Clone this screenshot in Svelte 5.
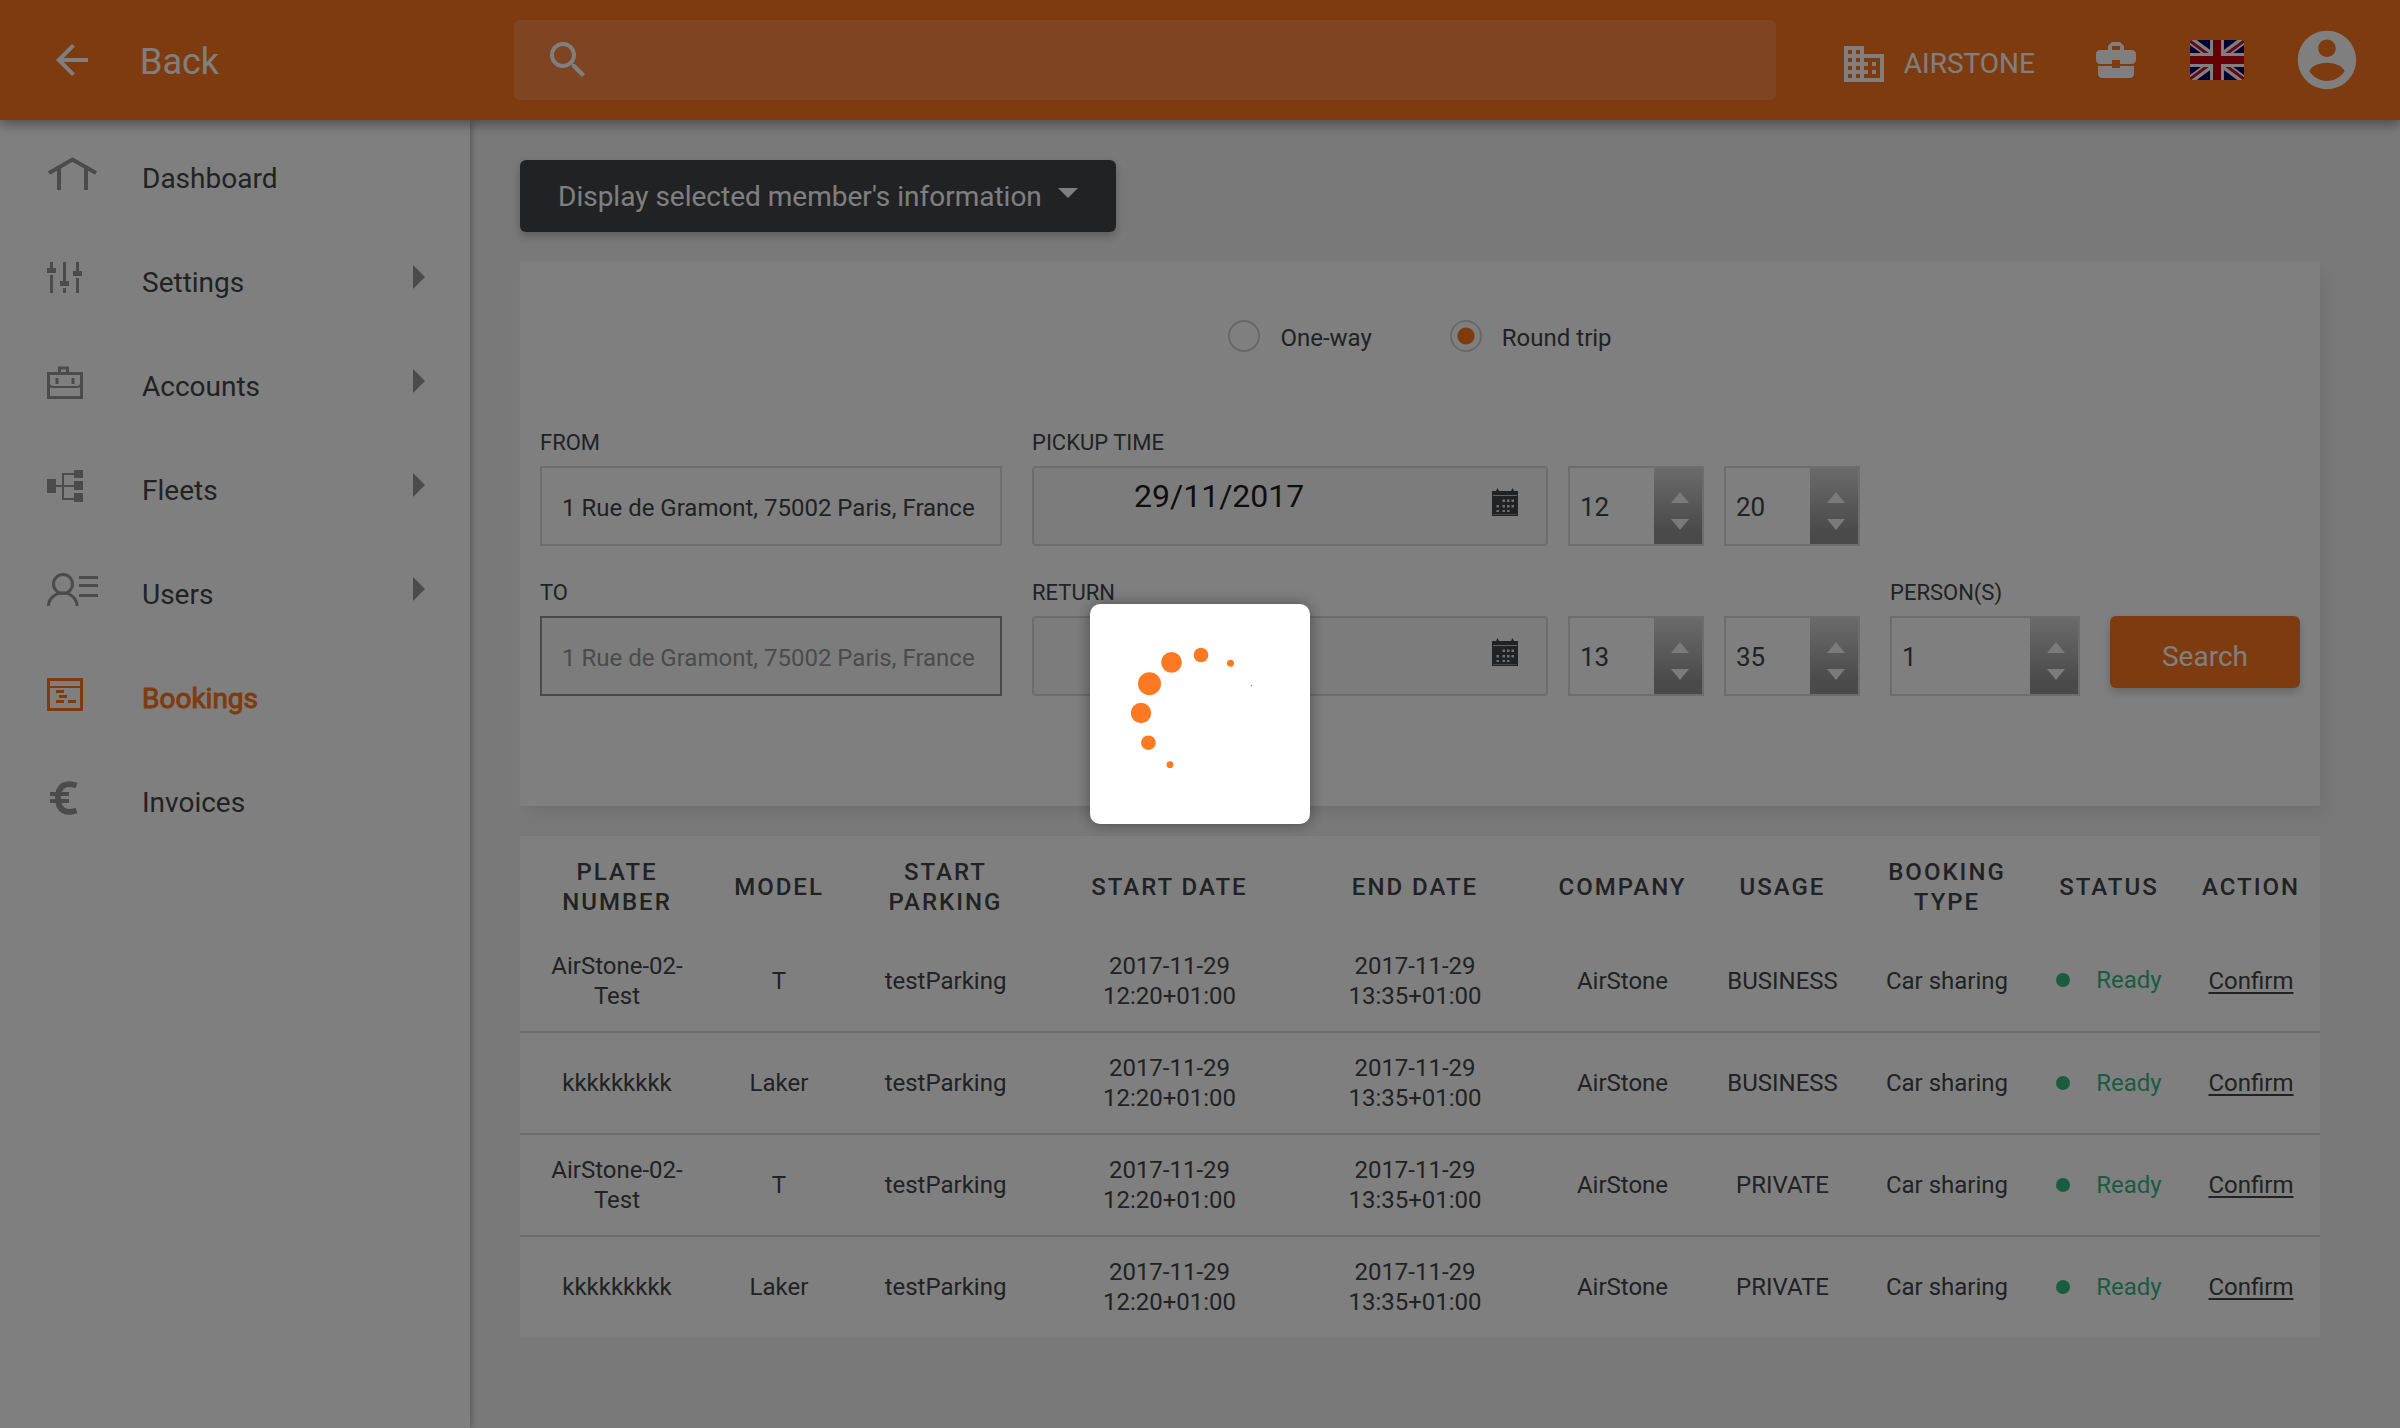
<script>
  const nav = [
    { id: 'dashboard', label: 'Dashboard', more: false },
    { id: 'settings', label: 'Settings', more: true },
    { id: 'accounts', label: 'Accounts', more: true },
    { id: 'fleets', label: 'Fleets', more: true },
    { id: 'users', label: 'Users', more: true },
    { id: 'bookings', label: 'Bookings', more: false, active: true },
    { id: 'invoices', label: 'Invoices', more: false }
  ];

  const columns = [
    { title: 'Plate number', share: 194 },
    { title: 'Model', share: 130 },
    { title: 'Start parking', share: 203 },
    { title: 'Start date', share: 245 },
    { title: 'End date', share: 246 },
    { title: 'Company', share: 169 },
    { title: 'Usage', share: 151 },
    { title: 'Booking type', share: 178 },
    { title: 'Status', share: 146 },
    { title: 'Action', share: 138 }
  ];
  const total = columns.reduce((sum, c) => sum + c.share, 0);

  const start = '2017-11-29 12:20+01:00';
  const end = '2017-11-29 13:35+01:00';
  const rows = [
    ['AirStone-02-Test', 'T', 'testParking', start, end, 'AirStone', 'BUSINESS', 'Car sharing'],
    ['kkkkkkkkk', 'Laker', 'testParking', start, end, 'AirStone', 'BUSINESS', 'Car sharing'],
    ['AirStone-02-Test', 'T', 'testParking', start, end, 'AirStone', 'PRIVATE', 'Car sharing'],
    ['kkkkkkkkk', 'Laker', 'testParking', start, end, 'AirStone', 'PRIVATE', 'Car sharing']
  ];

  let trip = $state('round');
  let pickupDate = $state('29/11/2017');
  let returnDate = $state('29/11/2017');
</script>

{#snippet calendar()}
  <svg class="calendar" width="26" height="28" viewBox="0 0 26 28" aria-hidden="true">
    <path fill="#424549" d="M0 3h4l1.500-3L7 3h12l1.500-3L22 3h4v25H0z" />
    <path fill="#c4c4c4" d="M1 7h24v1H1z" />
    <path fill="#8a8a8a" d="M1 26h24v1H1z" />
    <path fill="#e0e0e0" d="M10.500 11.500H13V14h-2.500zm4.500 0h2.500V14H15zm4.500 0H22V14h-2.500zM4.500 17H7v2.500H4.500zm6 0H13v2.500h-2.500zm4.500 0h2.500v2.500H15zm4.500 0H22v2.500h-2.500zM4.500 22H7v2H4.500zm6 0H13v2h-2.500zm4.500 0h2.500v2H15z" />
  </svg>
{/snippet}

{#snippet stepper(id, name, value)}
  <div class="stepper">
    <input {id} type="text" inputmode="numeric" aria-label={name} {value} />
    <div class="steps">
      <button type="button" aria-label="Increase {name}"><svg width="20" height="12" viewBox="0 0 20 12"><path d="M10 0l9 11H1z" /></svg></button>
      <button type="button" aria-label="Decrease {name}"><svg width="20" height="12" viewBox="0 0 20 12"><path d="M10 12L1 1h18z" /></svg></button>
    </div>
  </div>
{/snippet}

{#snippet navIcon(id)}
  {#if id === 'dashboard'}
    <svg width="52" height="34" viewBox="0 0 52 34"><path d="M2 16L25.500 2.500 49 16M12 11v22M39 11v22" fill="none" stroke="currentColor" stroke-width="4" /></svg>
  {:else if id === 'settings'}
    <svg width="36" height="32" viewBox="0 0 36 32"><path d="M3 0h3v6h3v5H0V6h3zm0 13h3v18H3zM16 0h3v19h3v5h-9v-5h3zm0 26h3v5h-3zM29 0h3v9h3v5h-9V9h3zm0 16h3v15h-3z" fill="currentColor" /></svg>
  {:else if id === 'accounts'}
    <svg width="36" height="33" viewBox="0 0 36 33"><g fill="none" stroke="currentColor"><path d="M1.500 7.500h33v24h-33z" stroke-width="3" /><path d="M12.500 7V2h8v5" stroke-width="3" /><path d="M2 17c0 3 2 4 4 4h24c2 0 4-1 4-4" stroke-width="2" /><path d="M10 12v6M26 12v6" stroke-width="3" /></g></svg>
  {:else if id === 'fleets'}
    <svg width="36" height="32" viewBox="0 0 36 32"><path d="M0 9h9v14H0zM27 0h9v8h-9zM27 11h9v9h-9zM27 23h9v9h-9z" fill="currentColor" /><path d="M9 16h18M27 4H16v25h11" fill="none" stroke="currentColor" stroke-width="2" /></svg>
  {:else if id === 'users'}
    <svg width="52" height="34" viewBox="0 0 52 34"><g fill="none" stroke="currentColor" stroke-width="3"><circle cx="16" cy="11" r="9.500" /><path d="M1.500 33c0-7 6-13 14.500-13s14 6 14 13M32 4.500h19M32 12.500h19M32 22.500h19" /></g></svg>
  {:else if id === 'bookings'}
    <svg width="36" height="33" viewBox="0 0 36 33"><path d="M1.500 1.500h33v30h-33z" fill="none" stroke="currentColor" stroke-width="3" /><path d="M3 8h30v2H3zM9 12h8v3H9zM12 17h8v3h-8zM9 22h8v3H9zM21 22h8v3h-8z" fill="currentColor" /></svg>
  {:else}
    <svg width="36" height="34" viewBox="0 0 36 34"><path d="M29.500 4.500C19 1 11 4 11 17s8 16 18.500 12.500" fill="none" stroke="currentColor" stroke-width="6" /><path d="M3 13h19M3 20h19" stroke="currentColor" stroke-width="4" /></svg>
  {/if}
{/snippet}

<div class="app">
  <header>
    <a class="back" href="#back">
      <svg width="48" height="48" viewBox="0 0 24 24"><path d="M20 11H7.830l5.590-5.590L12 4l-8 8 8 8 1.410-1.410L7.830 13H20v-2z" /></svg>
      <span>Back</span>
    </a>
    <label class="search">
      <svg width="48" height="48" viewBox="0 0 24 24"><path d="M15.500 14h-.79l-.28-.27C15.410 12.590 16 11.110 16 9.500 16 5.910 13.090 3 9.500 3S3 5.910 3 9.500 5.910 16 9.500 16c1.610 0 3.090-.59 4.230-1.570l.27.28v.79l5 4.990L20.490 19l-4.990-5zm-6 0C7.010 14 5 11.990 5 9.500S7.010 5 9.500 5 14 7.010 14 9.500 11.990 14 9.500 14z" /></svg>
      <input type="search" aria-label="Search the site" />
    </label>
    <div class="tools">
      <a class="company" href="#company">
        <svg width="48" height="48" viewBox="0 0 24 24"><path d="M12 7V3H2v18h20V7H12zM6 19H4v-2h2v2zm0-4H4v-2h2v2zm0-4H4V9h2v2zm0-4H4V5h2v2zm4 12H8v-2h2v2zm0-4H8v-2h2v2zm0-4H8V9h2v2zm0-4H8V5h2v2zm10 12h-8v-2h2v-2h-2v-2h2v-2h-2V9h8v10zm-2-8h-2v2h2v-2zm0 4h-2v2h2v-2z" /></svg>
        <span>AIRSTONE</span>
      </a>
      <button class="case" type="button" aria-label="Business">
        <svg width="48" height="48" viewBox="0 0 24 24"><path d="M10 16v-1H3.010L3 19c0 1.110.89 2 2 2h14c1.110 0 2-.89 2-2v-4h-7v1h-4zm10-9h-4.010V5l-2-2h-4l-2 2v2H4c-1.100 0-2 .9-2 2v3c0 1.110.89 2 2 2h6v-2h4v2h6c1.100 0 2-.9 2-2V9c0-1.100-.9-2-2-2zm-6 0h-4V5h4v2z" /></svg>
      </button>
      <button class="flag" type="button" aria-label="English">
        <svg width="54" height="40" viewBox="0 0 54 40">
          <path fill="#006" d="M0 0h54v40H0z" />
          <path stroke="#fff" stroke-width="8" d="M0 0l54 40M54 0L0 40" />
          <path stroke="#c8102e" stroke-width="3" d="M0 1l27 20M54 39L27 19M54 1L27 21M0 39l27-20" />
          <path fill="#fff" d="M20 0h14v40H20zM0 13h54v14H0z" />
          <path fill="#c8000c" d="M23 0h8v40h-8zM0 16h54v8H0z" />
        </svg>
      </button>
      <button class="avatar" type="button" aria-label="My profile">
        <svg width="70" height="70" viewBox="0 0 24 24"><path d="M12 2C6.480 2 2 6.480 2 12s4.480 10 10 10 10-4.480 10-10S17.520 2 12 2zm0 3c1.660 0 3 1.340 3 3s-1.340 3-3 3-3-1.340-3-3 1.340-3 3-3zm0 14.200c-2.500 0-4.710-1.280-6-3.220.03-1.990 4-3.080 6-3.080 1.990 0 5.970 1.090 6 3.080-1.290 1.940-3.500 3.220-6 3.220z" /></svg>
      </button>
    </div>
  </header>

  <div class="body">
    <nav>
      {#each nav as item (item.id)}
        <a href="#{item.id}" class:active={item.active}>
          <span class="icon">{@render navIcon(item.id)}</span>
          <span class="label">{item.label}</span>
          {#if item.more}
            <svg class="more" width="12" height="24" viewBox="0 0 12 24"><path d="M0 0l12 12L0 24z" fill="currentColor" /></svg>
          {/if}
        </a>
      {/each}
    </nav>

    <main>
      <button class="member" type="button">
        <span>Display selected member's information</span>
        <svg width="20" height="10" viewBox="0 0 20 10"><path d="M0 0h20L10 10z" /></svg>
      </button>

      <form class="card booking" onsubmit={(e) => e.preventDefault()}>
        <div class="trip">
          <label><input type="radio" name="trip" value="one" bind:group={trip} /><span>One-way</span></label>
          <label><input type="radio" name="trip" value="round" bind:group={trip} /><span>Round trip</span></label>
        </div>

        <div class="line">
          <div class="field place">
            <label for="from">FROM</label>
            <input id="from" type="text" value="1 Rue de Gramont, 75002 Paris, France" />
          </div>
          <div class="field date">
            <label for="pickup">PICKUP TIME</label>
            <div class="datebox">
              <input id="pickup" type="text" bind:value={pickupDate} />
              {@render calendar()}
            </div>
          </div>
          {@render stepper('pickup-hour', 'pickup hour', '12')}
          {@render stepper('pickup-minute', 'pickup minute', '20')}
        </div>

        <div class="line">
          <div class="field place">
            <label for="to">TO</label>
            <input id="to" type="text" value="1 Rue de Gramont, 75002 Paris, France" disabled />
          </div>
          <div class="field date">
            <label for="return">RETURN</label>
            <div class="datebox">
              <input id="return" type="text" bind:value={returnDate} />
              {@render calendar()}
            </div>
          </div>
          {@render stepper('return-hour', 'return hour', '13')}
          {@render stepper('return-minute', 'return minute', '35')}
          <div class="field persons">
            <label for="persons">PERSON(S)</label>
            {@render stepper('persons', 'persons', '1')}
          </div>
          <button class="submit" type="submit">Search</button>
        </div>
      </form>

      <div class="card">
        <table>
          <colgroup>
            {#each columns as c (c.title)}
              <col style="width: {(c.share / total) * 100}%" />
            {/each}
          </colgroup>
          <thead>
            <tr>
              {#each columns as c (c.title)}<th scope="col">{c.title}</th>{/each}
            </tr>
          </thead>
          <tbody>
            {#each rows as row, i (i)}
              <tr>
                {#each row as cell, j (j)}<td>{cell}</td>{/each}
                <td><span class="status">Ready</span></td>
                <td><a href="#confirm">Confirm</a></td>
              </tr>
            {/each}
          </tbody>
        </table>
      </div>
    </main>
  </div>
</div>

<div class="overlay">
  <div class="loader" role="status" aria-label="Loading">
    <svg width="220" height="220" viewBox="0 0 220 220" fill="#ff7922">
      <circle cx="111" cy="51" r="7.300" />
      <circle cx="81.500" cy="58.300" r="10.400" />
      <circle cx="59.500" cy="79.700" r="11.500" />
      <circle cx="51" cy="109" r="10.200" />
      <circle cx="58.400" cy="138.700" r="7.300" />
      <circle cx="80" cy="160.700" r="3.400" />
      <circle cx="140.500" cy="59.300" r="3.500" />
      <circle cx="161.400" cy="81.600" r="0.800" />
    </svg>
  </div>
</div>

<style>
  :global(body) {
    margin: 0;
    background: #f3f3f3;
  }
  .app,
  .app input,
  .app button {
    font-family: Roboto, 'Liberation Sans', sans-serif;
    color: #424549;
  }
  .app *,
  .overlay * {
    box-sizing: border-box;
  }
  .app {
    display: flex;
    flex-direction: column;
    min-height: 100vh;
    font-size: 24px;
    line-height: 30px;
  }
  svg {
    display: block;
    flex: none;
  }
  a {
    color: inherit;
    text-decoration: none;
  }
  button {
    border: 0;
    padding: 0;
    background: none;
    cursor: pointer;
  }

  header {
    display: flex;
    align-items: center;
    height: 120px;
    padding: 0 38px 0 48px;
    background: #fd7721;
    box-shadow: 0 4px 12px rgba(0, 0, 0, 0.4);
    position: relative;
    z-index: 2;
    fill: #fff;
  }
  .back {
    display: flex;
    align-items: center;
    gap: 44px;
    width: 466px;
    font-size: 36px;
    color: #fff;
  }
  .back span {
    padding-top: 3px;
  }
  .search {
    display: flex;
    align-items: center;
    flex: 1;
    height: 80px;
    padding: 0 30px;
    border-radius: 6px;
    background: #ff8b45;
  }
  .search input {
    flex: 1;
    min-width: 0;
    height: 60px;
    border: 0;
    outline: 0;
    background: none;
    font-size: 28px;
  }
  .tools {
    display: flex;
    align-items: center;
    margin-left: 64px;
  }
  .company {
    display: flex;
    align-items: center;
    gap: 16px;
    padding-top: 8px;
    font-size: 28px;
    color: #fff;
  }
  .case {
    margin-left: 57px;
  }
  .flag {
    margin-left: 50px;
  }
  .avatar {
    margin-left: 48px;
  }

  .body {
    display: flex;
    flex: 1;
  }
  nav {
    flex: none;
    width: 470px;
    padding-top: 2px;
    background: #fff;
    box-shadow: 2px 0 6px rgba(0, 0, 0, 0.25);
    position: relative;
  }
  nav a {
    display: flex;
    align-items: center;
    height: 104px;
    padding: 0 45px 0 47px;
    font-size: 28px;
  }
  nav .icon {
    width: 95px;
    color: #969696;
  }
  nav .label {
    flex: 1;
    padding-top: 9px;
  }
  nav .more {
    margin-bottom: 2px;
    color: #969696;
  }
  nav .active,
  nav .active .icon {
    color: #fd7721;
  }
  nav .active .label {
    -webkit-text-stroke: 1px #fd7721;
  }

  main {
    display: flex;
    flex-direction: column;
    align-items: stretch;
    gap: 30px;
    flex: 1;
    min-width: 0;
    padding: 40px 80px 40px 50px;
  }
  .member {
    display: flex;
    align-items: center;
    align-self: flex-start;
    gap: 16px;
    height: 72px;
    padding: 0 38px;
    border-radius: 6px;
    background: #424549;
    box-shadow: 0 4px 10px rgba(0, 0, 0, 0.25);
    font-size: 28px;
    fill: #fff;
  }
  .app .member {
    color: #fff;
  }
  .member svg {
    margin-bottom: 6px;
  }
  .card {
    background: #fff;
  }
  .booking {
    padding: 58px 20px 110px;
    box-shadow: 6px 8px 14px rgba(0, 0, 0, 0.07);
  }
  .trip {
    display: flex;
    justify-content: center;
    gap: 78px;
    margin-bottom: 86px;
  }
  .trip label {
    display: flex;
    align-items: center;
    gap: 20px;
    height: 32px;
  }
  .trip span {
    padding-top: 3px;
  }
  .trip input {
    appearance: none;
    width: 32px;
    height: 32px;
    margin: 0;
    border: 2px solid #d0d0d0;
    border-radius: 50%;
    background: #fff;
  }
  .trip input:checked {
    background: radial-gradient(circle, #fd7721 8px, #fff 9px);
  }
  .line {
    display: flex;
    align-items: flex-end;
    gap: 20px;
  }
  .line + .line {
    margin-top: 42px;
  }
  .field {
    display: flex;
    flex-direction: column;
    gap: 8px;
    font-size: 22px;
  }
  .field > label {
    line-height: 30px;
    white-space: nowrap;
  }
  .line > .field {
    margin-top: -10px;
  }
  .place {
    flex: 0 1 462px;
    margin-right: 10px;
  }
  .place input {
    width: 100%;
    height: 80px;
    padding: 4px 20px 0;
    border: 2px solid #dadada;
    background: #fff;
    font-size: 24px;
  }
  .place input:disabled {
    border-color: #929292;
    background: #f9f9f9;
    color: #969696;
  }
  .date {
    flex: 0 1 516px;
    min-width: 0;
  }
  .datebox {
    display: flex;
    align-items: center;
    height: 80px;
    padding: 0 28px 8px 0;
    border: 2px solid #dadada;
    border-radius: 4px;
    background: #f9f9f9;
  }
  .datebox input {
    flex: 1;
    min-width: 0;
    height: 60px;
    padding: 0 0 12px 100px;
    border: 0;
    background: none;
    font-size: 32px;
  }
  .app .datebox input {
    color: #1c1c1c;
  }
  .stepper {
    display: flex;
    width: 136px;
    height: 80px;
    border: 2px solid #dadada;
    background: #fff;
  }
  .stepper input {
    flex: 1;
    min-width: 0;
    padding: 2px 0 0 10px;
    border: 0;
    background: none;
    font-size: 26px;
  }
  .steps {
    display: flex;
    flex-direction: column;
    align-items: center;
    gap: 14px;
    width: 48px;
    padding: 24px 0 0 3px;
    background: linear-gradient(#d6d6d6, #949494 85%);
    fill: #f4f4f4;
  }
  .persons {
    margin-left: 10px;
  }
  .persons .stepper {
    width: 190px;
  }
  .submit {
    width: 190px;
    height: 72px;
    margin: 0 0 8px 10px;
    padding-top: 8px;
    border-radius: 6px;
    background: #fd7721;
    box-shadow: 0 4px 10px rgba(0, 0, 0, 0.2);
    font-size: 28px;
  }
  .app .submit {
    color: #fff;
  }

  table {
    width: 100%;
    table-layout: fixed;
    border-collapse: collapse;
    text-align: center;
  }
  th,
  td {
    padding: 20px 16px;
    vertical-align: middle;
  }
  th {
    height: 94px;
    padding: 8px 16px 0;
    font-weight: 500;
    letter-spacing: 2px;
    text-transform: uppercase;
  }
  td {
    height: 102px;
    border-bottom: 2px solid #d8d8d8;
  }
  tbody tr:last-child td {
    height: 100px;
    border-bottom: 0;
  }
  .status {
    display: inline-flex;
    align-items: center;
    gap: 26px;
    color: #34b884;
  }
  .status::before {
    content: '';
    width: 14px;
    height: 14px;
    border-radius: 50%;
    background: currentColor;
  }
  td:nth-child(9) {
    padding: 0 0 2px;
  }
  td a {
    text-decoration: underline;
    text-underline-offset: 3px;
    text-decoration-thickness: 2px;
  }

  .overlay {
    position: fixed;
    inset: 0;
    z-index: 10;
    display: flex;
    align-items: center;
    justify-content: center;
    background: rgba(0, 0, 0, 0.5);
  }
  .loader {
    border-radius: 10px;
    background: #fff;
    box-shadow: 0 0 16px rgba(0, 0, 0, 0.4);
  }
</style>
